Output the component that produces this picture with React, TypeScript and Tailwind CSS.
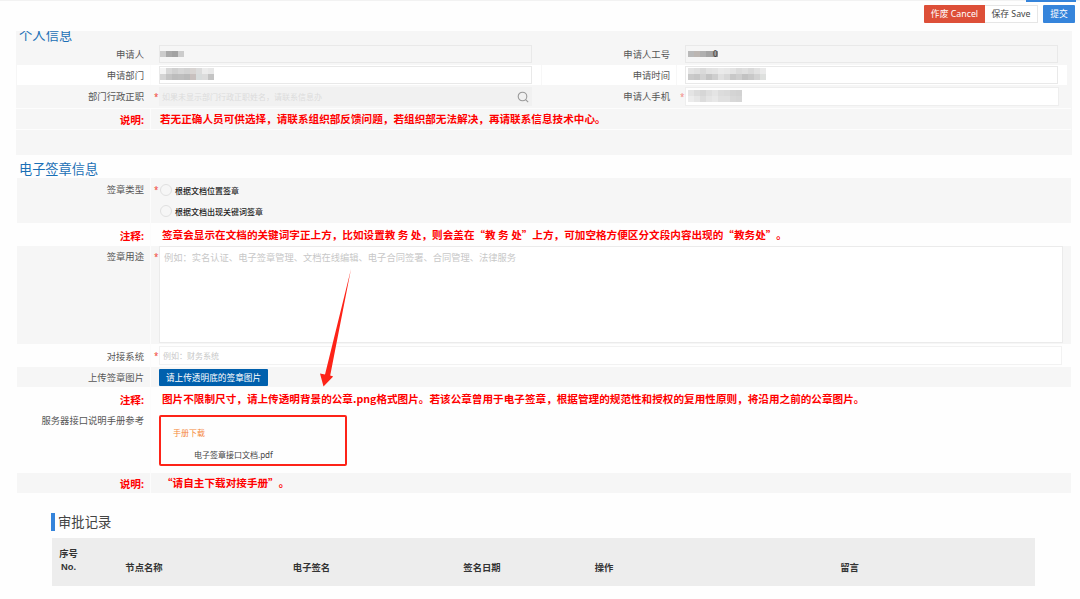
import React from "react";

const note = "text-[10.62px] font-bold text-[#ff0000] whitespace-nowrap [text-spacing-trim:space-all] font-['Noto_Sans_CJK_SC',sans-serif]";

function Label({ children, bold = false, className = "" }: { children: React.ReactNode; bold?: boolean; className?: string }) {
  return (
    <div className={`flex w-[135px] shrink-0 justify-end border-r border-[#fcfcfc] pr-[6px] whitespace-nowrap ${bold ? "text-[10.67px] font-bold text-[#ff0000]" : "text-[9.33px] text-[#555]"} ${className}`}>
      {children}
    </div>
  );
}

function SideLabel({ children }: { children: React.ReactNode }) {
  return <div className="flex w-[145px] items-center justify-end pt-px pr-[7px] text-[9.33px] text-[#555]">{children}</div>;
}

function Star({ className = "" }: { className?: string }) {
  return <span className={`w-[8px] shrink-0 pl-[3px] text-[8px] text-[#f04030] ${className}`}>*</span>;
}

function Mosaic({ cells, className = "" }: { cells: string[][]; className?: string }) {
  return (
    <div className={`flex flex-col ${className}`}>
      {cells.map((row, i) => (
        <div key={i} className="flex">
          {row.map((c, j) => (
            <div key={j} className="h-[6px] w-[6px]" style={{ backgroundColor: c }} />
          ))}
        </div>
      ))}
    </div>
  );
}

const applicant = [
  ["#ccc", "#a9a9a9", "#a2a2a2", "#ccc"],
];
const staffNumber = [["#b9b9b9", "#bcb6b2", "#b0b0b0", "#a4a4a4", "#9f9f9f"]];
const department = [
  ["#f4f4f4", "#d8d8d8", "#d0d0d0", "#d6d6d6", "#d2d2d2", "#d8d4d2", "#dcdcdc", "#ececec", "#e8e8e8"],
  ["#d4d4d4", "#c4c4c4", "#bcbcbc", "#bebebe", "#bababa", "#c8c0be", "#d8dcdc", "#dcdcdc", "#c4c4c4"],
];
const time = [
  ["#e4e4e4", "#e0e0e0", "#dadada", "#e2e2e2", "#e4e4e4", "#eaeaea", "#e8e8e8", "#e4e4e4", "#dcdcdc", "#e0e0e0", "#dadada", "#e2e2e2", "#eaeaea"],
  ["#cacaca", "#c6c6c6", "#d2d2d2", "#c4c4c4", "#cecece", "#e0e0e0", "#d8d8d8", "#c8c8c8", "#cecece", "#c2c2c2", "#c8c8c8", "#d2d2d2", "#dee0de"],
];
const phone = [
  ["#e4e4e4", "#dcdcdc", "#d6d6d6", "#dedede", "#e4e4e4", "#dcdcdc", "#dadada", "#d4d4d4", "#d2d2d2"],
  ["#ececec", "#e6e6e6", "#dcdcdc", "#e4e4e4", "#e8e8e8", "#e0e0e0", "#e0e0e0", "#d8d8d8", "#d6d6d6"],
];

export default function App() {
  return (
    <div className="h-[599px] w-[1080px] overflow-hidden bg-[#fefefe] font-['Noto_Sans','Noto_Sans_CJK_SC',sans-serif] leading-none">
      <header className="relative flex h-[31px] justify-end border-t border-[#f2f2f2] pt-[4px] pr-[5px] text-[8.8px]">
        <div className="absolute -top-px right-[4px] h-[2px] w-[50px] bg-[#3584db]" />
        <button className="flex h-[18px] w-[61px] items-center justify-center rounded-l-[1px] bg-[#dd4f38] text-white">作废 Cancel</button>
        <button className="flex h-[18px] w-[53px] items-center justify-center border border-l-0 border-[#e6e6e6] bg-white text-[#444]">保存 Save</button>
        <button className="ml-[5px] flex h-[18px] w-[32px] items-center justify-center rounded-[1px] bg-[#3584db] text-white">提交</button>
      </header>

      <section className="ml-[16px] h-[124px] w-[1056px] bg-[#f6f6f6]">
        <div className="h-[13px] overflow-hidden pl-[3px]">
          <h2 className="-mt-[2px] text-[13.33px] text-[#1a6fb5]">个人信息</h2>
        </div>
        <div className="flex h-[21px]">
          <Label className="items-center border-transparent pt-px">申请人</Label>
          <div className="mt-px ml-[8px] flex h-[18px] w-[373px] items-center border border-[#e9e9e9]"><Mosaic cells={applicant} /></div>
          <SideLabel>申请人工号</SideLabel>
          <div className="mt-px ml-[8px] flex h-[18px] w-[373px] items-center border border-[#e9e9e9] pl-[2px]">
            <Mosaic cells={staffNumber} />
            <span className="-ml-[5px] text-[8px] text-[#333]">0</span>
          </div>
        </div>
        <div className="ml-px flex h-[20px] w-[1050px] bg-white">
          <Label className="-ml-px items-center border-[#f6f6f6] pt-px">申请部门</Label>
          <div className="mt-px ml-[8px] flex h-[18px] w-[373px] items-center border border-[#e9e9e9]"><Mosaic cells={department} className="-mt-[2px]" /></div>
          <div className="ml-[9px] w-px bg-[#f7f7f7]" />
          <div className="flex w-[135px] items-center justify-end border-r border-[#f7f7f7] pt-px pr-[6px] text-[9.33px] text-[#555]">申请时间</div>
          <div className="mt-px ml-[8px] flex h-[18px] w-[373px] items-center border border-[#e9e9e9] pl-[2px]"><Mosaic cells={time} className="-mt-[2px]" /></div>
        </div>
        <div className="flex h-[23px]">
          <Label className="items-center border-transparent pt-px">部门行政正职</Label>
          <Star className="pt-[8px]" />
          <div className="mt-[2px] flex h-[19px] w-[373px] items-center justify-between bg-[#f1f1f1] pr-[3px] pl-[3px] text-[8px] text-[#dcdcdc]">
            如果未显示部门行政正职姓名，请联系信息办
            <svg className="mt-px h-[12px] w-[12px]" viewBox="0 0 12 12" fill="none" stroke="#999" strokeWidth="1.1"><circle cx="5.5" cy="5.5" r="4.3" /><path d="M8.6 8.6 11.2 11.2" /></svg>
          </div>
          <SideLabel>申请人手机</SideLabel>
          <Star className="pt-[8px] opacity-60" />
          <div className="mt-[2px] flex h-[19px] w-[374px] items-center border border-[#eee] bg-white pl-[2px]"><Mosaic cells={phone} className="-mt-px" /></div>
        </div>
        <div className="flex h-[22px] w-[1055px] border-y border-[#fdfdfd]">
          <Label bold className="items-center pt-[2px]">说明:</Label>
          <p className={`ml-[9px] pt-[4.5px] ${note}`}>若无正确人员可供选择，请联系组织部反馈问题，若组织部无法解决，再请联系信息技术中心。</p>
        </div>
      </section>

      <section className="ml-[17px] w-[1054px]">
        <h2 className="h-[23px] pt-[8px] pl-[2px] text-[13.2px] text-[#1a6fb5]">电子签章信息</h2>
        <div className="flex h-[45px] bg-[#f6f6f6]">
          <Label className="-ml-px pt-[7px]">签章类型</Label>
          <Star className="pt-[8px]" />
          <div className="flex flex-col gap-[9px] pt-[6px] pl-[1px] text-[8px] font-medium text-[#222]">
            <label className="flex items-center gap-[3px]"><span className="size-[12px] rounded-full border border-[#e0e0e0]" /><span className="pt-px">根据文档位置签章</span></label>
            <label className="flex items-center gap-[3px]"><span className="size-[12px] rounded-full border border-[#e0e0e0]" /><span className="pt-px">根据文档出现关键词签章</span></label>
          </div>
        </div>
        <div className="flex h-[23px]">
          <Label bold className="-ml-px items-center pt-[3px]">注释:</Label>
          <p className={`ml-[11px] pt-[6.5px] ${note}`}>签章会显示在文档的关键词字正上方，比如设置教 务 处，则会盖在“教 务 处”上方，可加空格方便区分文段内容出现的“教务处”。</p>
        </div>
        <div className="flex h-[98px] bg-[#f6f6f6]">
          <Label className="-ml-px pt-[6px]">签章用途</Label>
          <Star className="pt-[7px]" />
          <div className="h-[97px] w-[904px] border border-[#ebebeb] bg-white pt-[6px] pl-[4px] text-[9.28px] text-[#c8c8c8]">例如：实名认证、电子签章管理、文档在线编辑、电子合同签署、合同管理、法律服务</div>
        </div>
        <div className="flex h-[23px]">
          <Label className="-ml-px items-center pt-[2px]">对接系统</Label>
          <Star className="pt-[8px]" />
          <div className="mt-[2px] flex h-[19px] w-[903px] items-center border border-[#f2f2f2] bg-white pl-[3px] text-[8px] text-[#c8c8c8]">例如：财务系统</div>
        </div>
        <div className="flex h-[20px] bg-[#f6f6f6]">
          <Label className="-ml-px items-center pt-[2px]">上传签章图片</Label>
          <button className="mt-[2px] ml-[8px] flex h-[17px] w-[109px] items-center justify-center rounded-[1px] bg-[#0060ad] pt-px text-[8.67px] text-white">请上传透明底的签章图片</button>
        </div>
        <div className="flex h-[24px]">
          <Label bold className="-ml-px items-center pt-[2px]">注释:</Label>
          <p className={`ml-[11px] pt-[6.5px] ${note}`}>图片不限制尺寸，请上传透明背景的公章.png格式图片。若该公章曾用于电子签章，根据管理的规范性和授权的复用性原则，将沿用之前的公章图片。</p>
        </div>
        <div className="flex h-[62px]">
          <Label className="-ml-px pt-[5px]">服务器接口说明手册参考</Label>
          <div className="mt-[4px] ml-[8px] h-[51px] w-[188px] rounded-[2px] border-2 border-[#fd2318] pt-[12px] pl-[12px] text-[8px]">
            <div className="text-[#f5883a]">手册下载</div>
            <div className="pt-[14px] pl-[21px] text-[#444]">电子签章接口文档.pdf</div>
          </div>
        </div>
        <div className="flex h-[20px] bg-[#f6f6f6]">
          <Label bold className="-ml-px items-center pt-[2px]">说明:</Label>
          <p className={`ml-[11px] pt-[5px] ${note}`}>“请自主下载对接手册”。</p>
        </div>
      </section>

      <section className="ml-[51px] w-[984px] pt-[20px]">
        <h2 className="flex h-[18px] items-center border-l-4 border-[#3584db] pt-px pl-[3px] text-[13.33px] text-[#444]">审批记录</h2>
        <div className="mt-[7px] ml-px grid h-[48px] grid-cols-[33px_118px_217px_124px_120px_371px] items-end bg-[#ededed] pb-[12px] text-center text-[9.33px] leading-[13px] font-bold text-[#333]">
          <div>序号<br /><span className="font-['Liberation_Sans',sans-serif]">No.</span></div><div>节点名称</div><div>电子签名</div><div>签名日期</div><div>操作</div><div>留言</div>
        </div>
      </section>

      <svg className="pointer-events-none absolute top-[268px] left-[316px]" width="40" height="120" viewBox="0 0 40 120"><path d="M35 1 14.2 107.5 17.2 108.5 7.5 118.5 4 105.5 9 106.5Z" fill="#fd2318" /></svg>
    </div>
  );
}
